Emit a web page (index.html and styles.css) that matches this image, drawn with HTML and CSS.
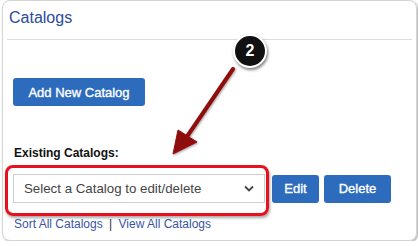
FILE: index.html
```html
<!DOCTYPE html>
<html lang="en">
<head>
  <meta charset="UTF-8" />
  <title>Catalogs</title>
  <link rel="stylesheet" href="styles.css">
</head>
<body>
  <div class="panel">
    <div class="panel-head">
      <h2>Catalogs</h2>
    </div>

    <div class="panel-body">
      <button class="btn btn-add">Add New Catalog</button>

      <label class="field-label">Existing Catalogs:</label>
      <div class="select-row">
        <div class="select">
          <span>Select a Catalog to edit/delete</span>
          <svg class="chevron" width="10" height="7" viewBox="0 0 10 7">
            <path d="M1 1.5 L5 5.5 L9 1.5" fill="none" stroke="#444" stroke-width="1.8" />
          </svg>
        </div>
        <button class="btn btn-edit">Edit</button>
        <button class="btn btn-delete">Delete</button>
      </div>

      <div class="links">
        <a href="#">Sort All Catalogs</a>
        <span class="sep">|</span>
        <a href="#">View All Catalogs</a>
      </div>
    </div>
  </div>

  <!-- annotation layer -->
  <div class="highlight"></div>
  <svg class="arrow" width="418" height="246" viewBox="0 0 418 246">
    <defs>
      <filter id="shadow" x="-20%" y="-20%" width="140%" height="140%">
        <feDropShadow dx="1" dy="1" stdDeviation="1" flood-color="#000" flood-opacity="0.35" />
      </filter>
    </defs>
    <g filter="url(#shadow)" fill="#8e0f0f" stroke="#8e0f0f">
      <line x1="233" y1="69" x2="186" y2="138" stroke-width="4" stroke-linecap="round" />
      <polygon points="173,154 178,130 197,142" stroke-width="1" stroke-linejoin="round" />
    </g>
  </svg>
  <div class="badge">2</div>
</body>
</html>
```

FILE: styles.css
```css
body {
  margin: 0;
  font-family: 'Liberation Sans', Arial, sans-serif;
  background: #fff;
}

.panel {
  margin: 0 1px 0 2px;
  height: 241px;
  box-sizing: border-box;
  border: 1px solid #d4d4d4;
  border-radius: 8px;
  box-shadow: 1px 1px 2px rgba(0, 0, 0, 0.35);
}

.panel-head {
  margin: 0 4px;
  height: 38px;
  border-bottom: 1px solid #dcdcdc;
}

.panel-head h2 {
  margin: 0;
  padding: 8px 0 0 2px;
  font-size: 16px;
  font-weight: normal;
  color: #2b4a9c;
}

.panel-body {
  padding: 38px 10px 0 9px;
}

.btn {
  background-color: #2d6cbd;
  color: white;
  border: none;
  border-radius: 3px;
  height: 28px;
  font-family: 'Liberation Sans', Arial, sans-serif;
  font-size: 13px;
  -webkit-text-stroke: 0.35px white;
  cursor: pointer;
}

.btn-add {
  display: block;
  padding: 0 15px;
  width: 132px;
  margin-left: 1px;
}

.field-label {
  display: block;
  margin-top: 40px;
  margin-left: 2px;
  font-size: 12px;
  font-weight: bold;
  color: #111;
}

.select-row {
  display: flex;
  align-items: center;
  margin-top: 14px;
  margin-left: 1px;
}

.select {
  width: 252px;
  height: 29px;
  box-sizing: border-box;
  border: 1px solid #cfcfcf;
  display: flex;
  align-items: center;
  justify-content: space-between;
  padding: 0 10px 0 10px;
  font-size: 13.3px;
  color: #444;
}

.btn-edit {
  margin-left: 7px;
  width: 47px;
}

.btn-delete {
  margin-left: 5px;
  width: 67px;
}

.links {
  margin-top: 14px;
  margin-left: 2px;
  font-size: 12px;
  color: #3a55a5;
}

.links a {
  color: #3a55a5;
  text-decoration: none;
}

.links .sep {
  margin: 0 3px;
  color: #333;
}

.highlight {
  position: absolute;
  left: 5px;
  top: 165px;
  width: 258px;
  height: 45px;
  border: 3px solid #e8101a;
  border-radius: 8px;
  box-shadow: 1px 2px 3px rgba(0, 0, 0, 0.35);
}

.arrow {
  position: absolute;
  left: 0;
  top: 0;
}

.badge {
  position: absolute;
  left: 233px;
  top: 34px;
  width: 30px;
  height: 30px;
  border: 2px solid #fff;
  border-radius: 50%;
  background: #111;
  box-shadow: 1px 2px 3px rgba(0, 0, 0, 0.5);
  color: #fff;
  font-weight: bold;
  font-size: 16px;
  line-height: 30px;
  text-align: center;
}
```
